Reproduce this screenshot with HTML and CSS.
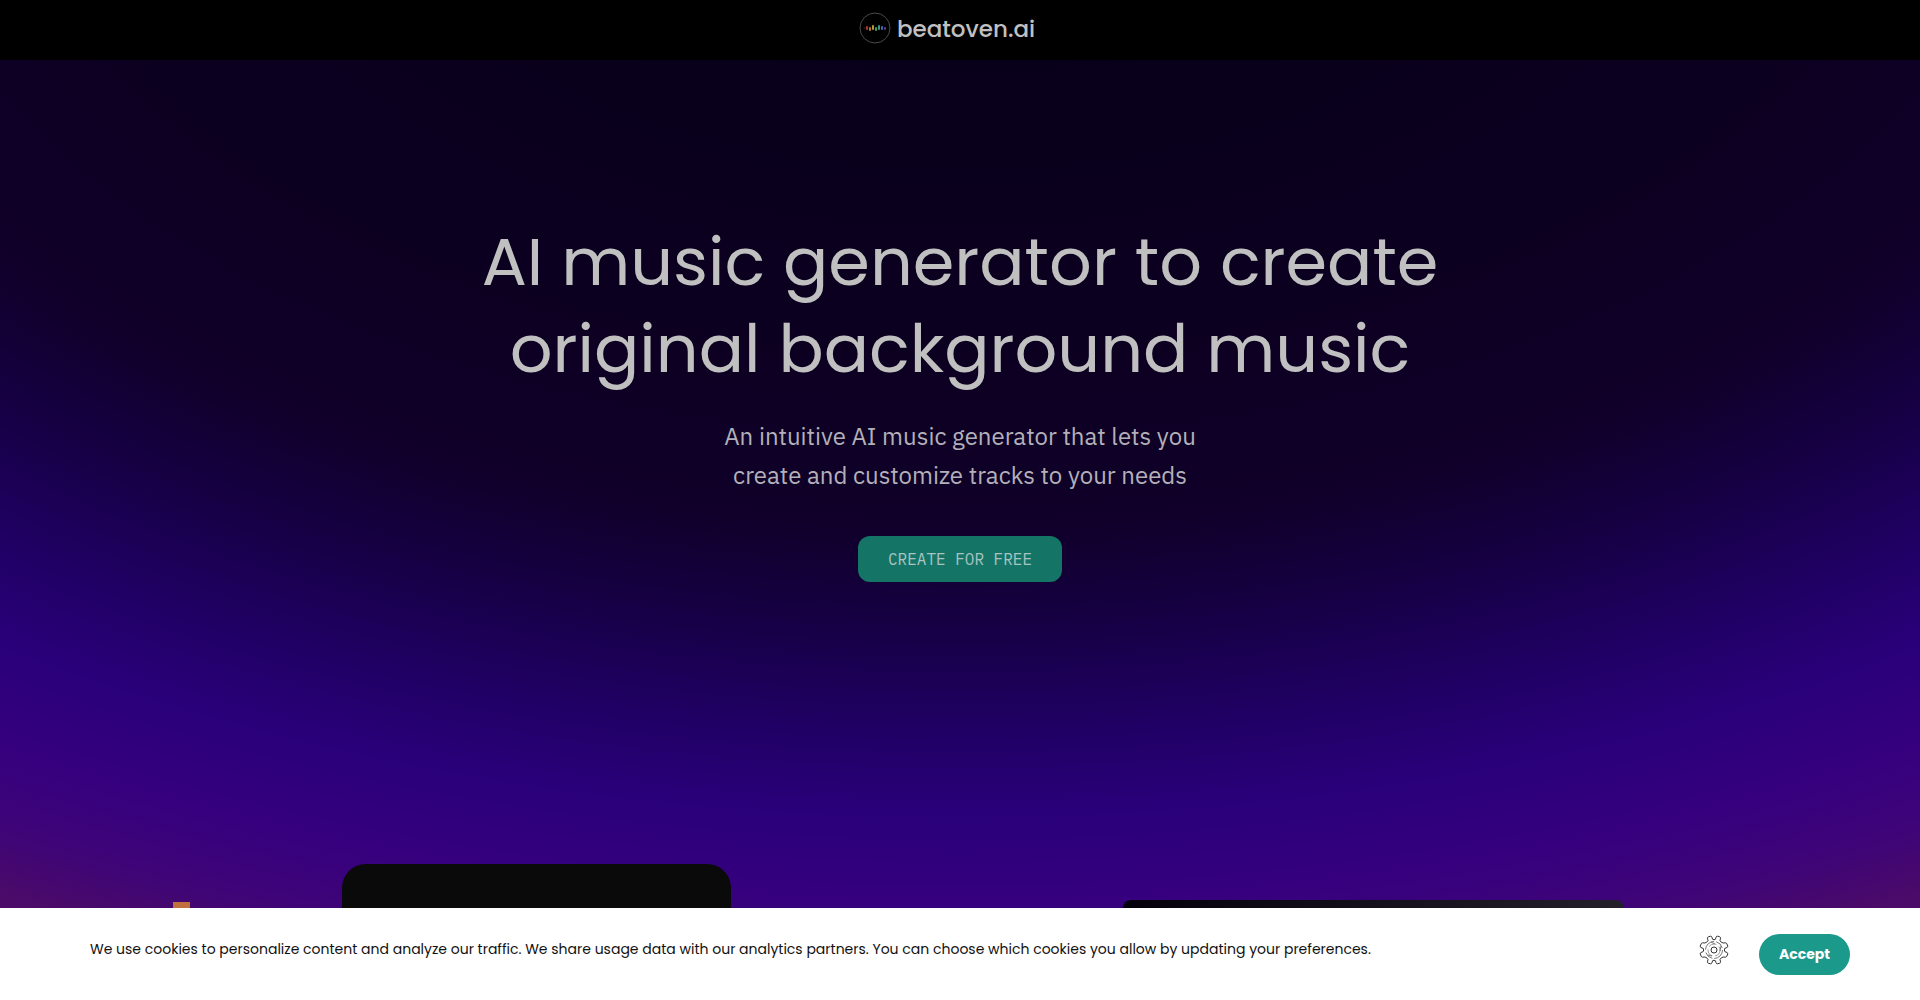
FILE: index.html
```html
<!DOCTYPE html>
<html lang="en">

<head>
  <meta charset="UTF-8">
  <meta name="viewport" content="width=device-width, initial-scale=1.0">
  <title>beatoven.ai</title>

  <link rel="stylesheet" href="styles.css">
</head>

<body>

  <header class="navbar">
    <a class="brand" href="#">
      <svg class="brand-icon" viewBox="0 0 32 32" aria-hidden="true">
        <circle cx="16" cy="16" r="15" fill="none" stroke="#4a4a4a" />
        <g stroke-width="2" stroke-linecap="round">
          <path d="M5 16h1" stroke="#5a2222" stroke-width="1" />
          <path d="M8 15v2" stroke="#a83a34" />
          <path d="M11 16v2" stroke="#b8702c" />
          <path d="M14 14v3" stroke="#b39c35" />
          <path d="M17 16v2" stroke="#4f9a4c" />
          <path d="M20 14v3" stroke="#2f9a8c" />
          <path d="M23 15v2" stroke="#3c6ab0" />
          <path d="M26 16v1" stroke="#5c3c8a" />
        </g>
      </svg>
      <span class="brand-name">beatoven.ai</span>
    </a>
  </header>

  <main class="hero">
    <h1 class="hero-title">AI music generator to create<br>original background music</h1>
    <p class="hero-text">An intuitive AI music generator that lets you<br>create and customize tracks to your needs</p>
    <a class="hero-button" href="#">CREATE FOR FREE</a>

    <div class="media">
      <div class="media-bar"></div>
      <div class="media-photo"></div>
      <div class="media-player"></div>
    </div>
  </main>

  <section class="cookies" aria-label="Cookies">
    <p class="cookies-text">We use cookies to personalize content and analyze our traffic. We share usage data with our analytics partners. You can choose which cookies you allow by updating your preferences.</p>
    <button class="cookies-settings" type="button" aria-label="Cookie preferences">
      <svg viewBox="0 0 30 30" width="30" height="30" fill="none" stroke="#333" aria-hidden="true">
        <path d="M13.6 4.3 12.9 2.2Q12.6 1.1 11.6 1.2L9.4 1.8Q8.4 2 8.5 3.2L9 5.6Q8 7.6 5.8 8L3.6 7.8Q2.6 7.8 2.2 8.8L1.2 11Q1 12 2 12.5L4.2 13.4Q5.2 15 4.2 16.6L2 17.5Q1 18 1.2 19L2.2 21.2Q2.6 22.2 3.6 22.2L5.8 22Q8 22.4 9 24.4L8.5 26.8Q8.4 28 9.4 28.3L11.6 28.8Q12.6 28.9 12.9 27.8L13.6 25.7Q15 24.8 16.4 25.7L17.1 27.8Q17.4 28.9 18.4 28.8L20.6 28.3Q21.6 28 21.5 26.8L21 24.4Q22 22.4 24.2 22L26.4 22.2Q27.4 22.2 27.8 21.2L28.8 19Q29 18 28 17.5L25.8 16.6Q24.8 15 25.8 13.4L28 12.5Q29 12 28.8 11L27.8 8.8Q27.4 7.8 26.4 7.8L24.2 8Q22 7.6 21 5.6L21.5 3.2Q21.6 2 20.6 1.7L18.4 1.2Q17.4 1.1 17.1 2.2L16.4 4.3Q15 5.2 13.6 4.3Z" />
        <circle cx="15" cy="15" r="8.5" stroke="#777" stroke-dasharray="13 2 9 3" />
        <circle cx="15" cy="15" r="6" stroke="#888" stroke-width=".8" stroke-dasharray="8 3" />
        <path d="M12 7 16 9M22 11l-1 5M9 20l4 1" stroke="#777" />
        <circle cx="15" cy="15" r="3" />
      </svg>
    </button>
    <button class="cookies-accept" type="button">Accept</button>
  </section>

</body>

</html>
```
FILE: styles.css
```css
* {
  box-sizing: border-box;
}

body {
  margin: 0;
  height: 100vh;
  display: flex;
  flex-direction: column;
  overflow: hidden;
  background-color: #000;
  font-family: Poppins, Inter, sans-serif;
}

.navbar {
  height: 60px;
  flex-shrink: 0;
  display: flex;
  align-items: center;
  justify-content: center;
  background-color: #000;
}

.brand {
  display: flex;
  align-items: center;
  gap: 6px;
  margin-right: 26px;
  padding-bottom: 4px;
  color: #c0c0c0;
  text-decoration: none;
}

.brand-icon {
  width: 32px;
  height: 32px;
}

.brand-name {
  padding-top: 2px;
  font-size: 23px;
  font-weight: 500;
  line-height: 32px;
}

.hero {
  flex: 1;
  min-height: 0;
  display: flex;
  flex-direction: column;
  align-items: center;
  padding-top: 158px;
  text-align: center;
  background: radial-gradient(115% 1300px at 50% -260px, #08001a 20%, #0c0020 41%, #10002a 56%, #160042 63%, #1f0062 71%, #2a007a 78%, #36007e 85%, #3e0478 90%, #4b0b68 95%);
}

.hero-title {
  margin: 0;
  font-size: 67px;
  font-weight: 400;
  line-height: 87px;
  color: #c0c0c0;
}

.hero-text {
  margin: 25px 0 41px;
  font-family: "IBM Plex Sans", "Noto Sans", sans-serif;
  font-size: 24px;
  line-height: 39px;
  color: #b3b0ba;
}

.hero-button {
  padding: 12px 30px;
  border-radius: 12px;
  background-color: #147567;
  color: #a9c3c0;
  font-family: "IBM Plex Mono", "Liberation Mono", monospace;
  font-size: 16px;
  line-height: 22px;
  text-decoration: none;
}

.media {
  width: 100%;
  flex: 1;
  display: grid;
  grid-template-columns: 173fr 17fr 152fr 389fr 392fr 501fr 296fr;
  align-items: end;
}

.media-bar {
  grid-column: 2;
  height: 6px;
  background-color: #c0703c;
}

.media-photo {
  grid-column: 4;
  height: 44px;
  border-radius: 24px 24px 0 0;
  background-color: #0a0a0a;
}

.media-player {
  grid-column: 6;
  height: 8px;
  border-radius: 12px 12px 0 0;
  background: linear-gradient(90deg, #04000c, #231f2b);
}

.cookies {
  height: 92px;
  flex-shrink: 0;
  display: flex;
  align-items: center;
  padding: 0 70px 0 90px;
  background-color: #fff;
}

.cookies-text {
  flex: 1;
  margin: 0;
  padding-bottom: 10px;
  font-size: 14px;
  line-height: 20px;
  color: #111;
}

.cookies-settings {
  display: flex;
  margin-right: 30px;
  padding: 0 0 8px;
  border: none;
  background: none;
  cursor: pointer;
}

.cookies-accept {
  height: 41px;
  padding: 0 20px;
  border: none;
  border-radius: 21px;
  background-color: #1b998b;
  color: #fff;
  font-family: inherit;
  font-size: 14px;
  font-weight: 700;
  cursor: pointer;
}
```
